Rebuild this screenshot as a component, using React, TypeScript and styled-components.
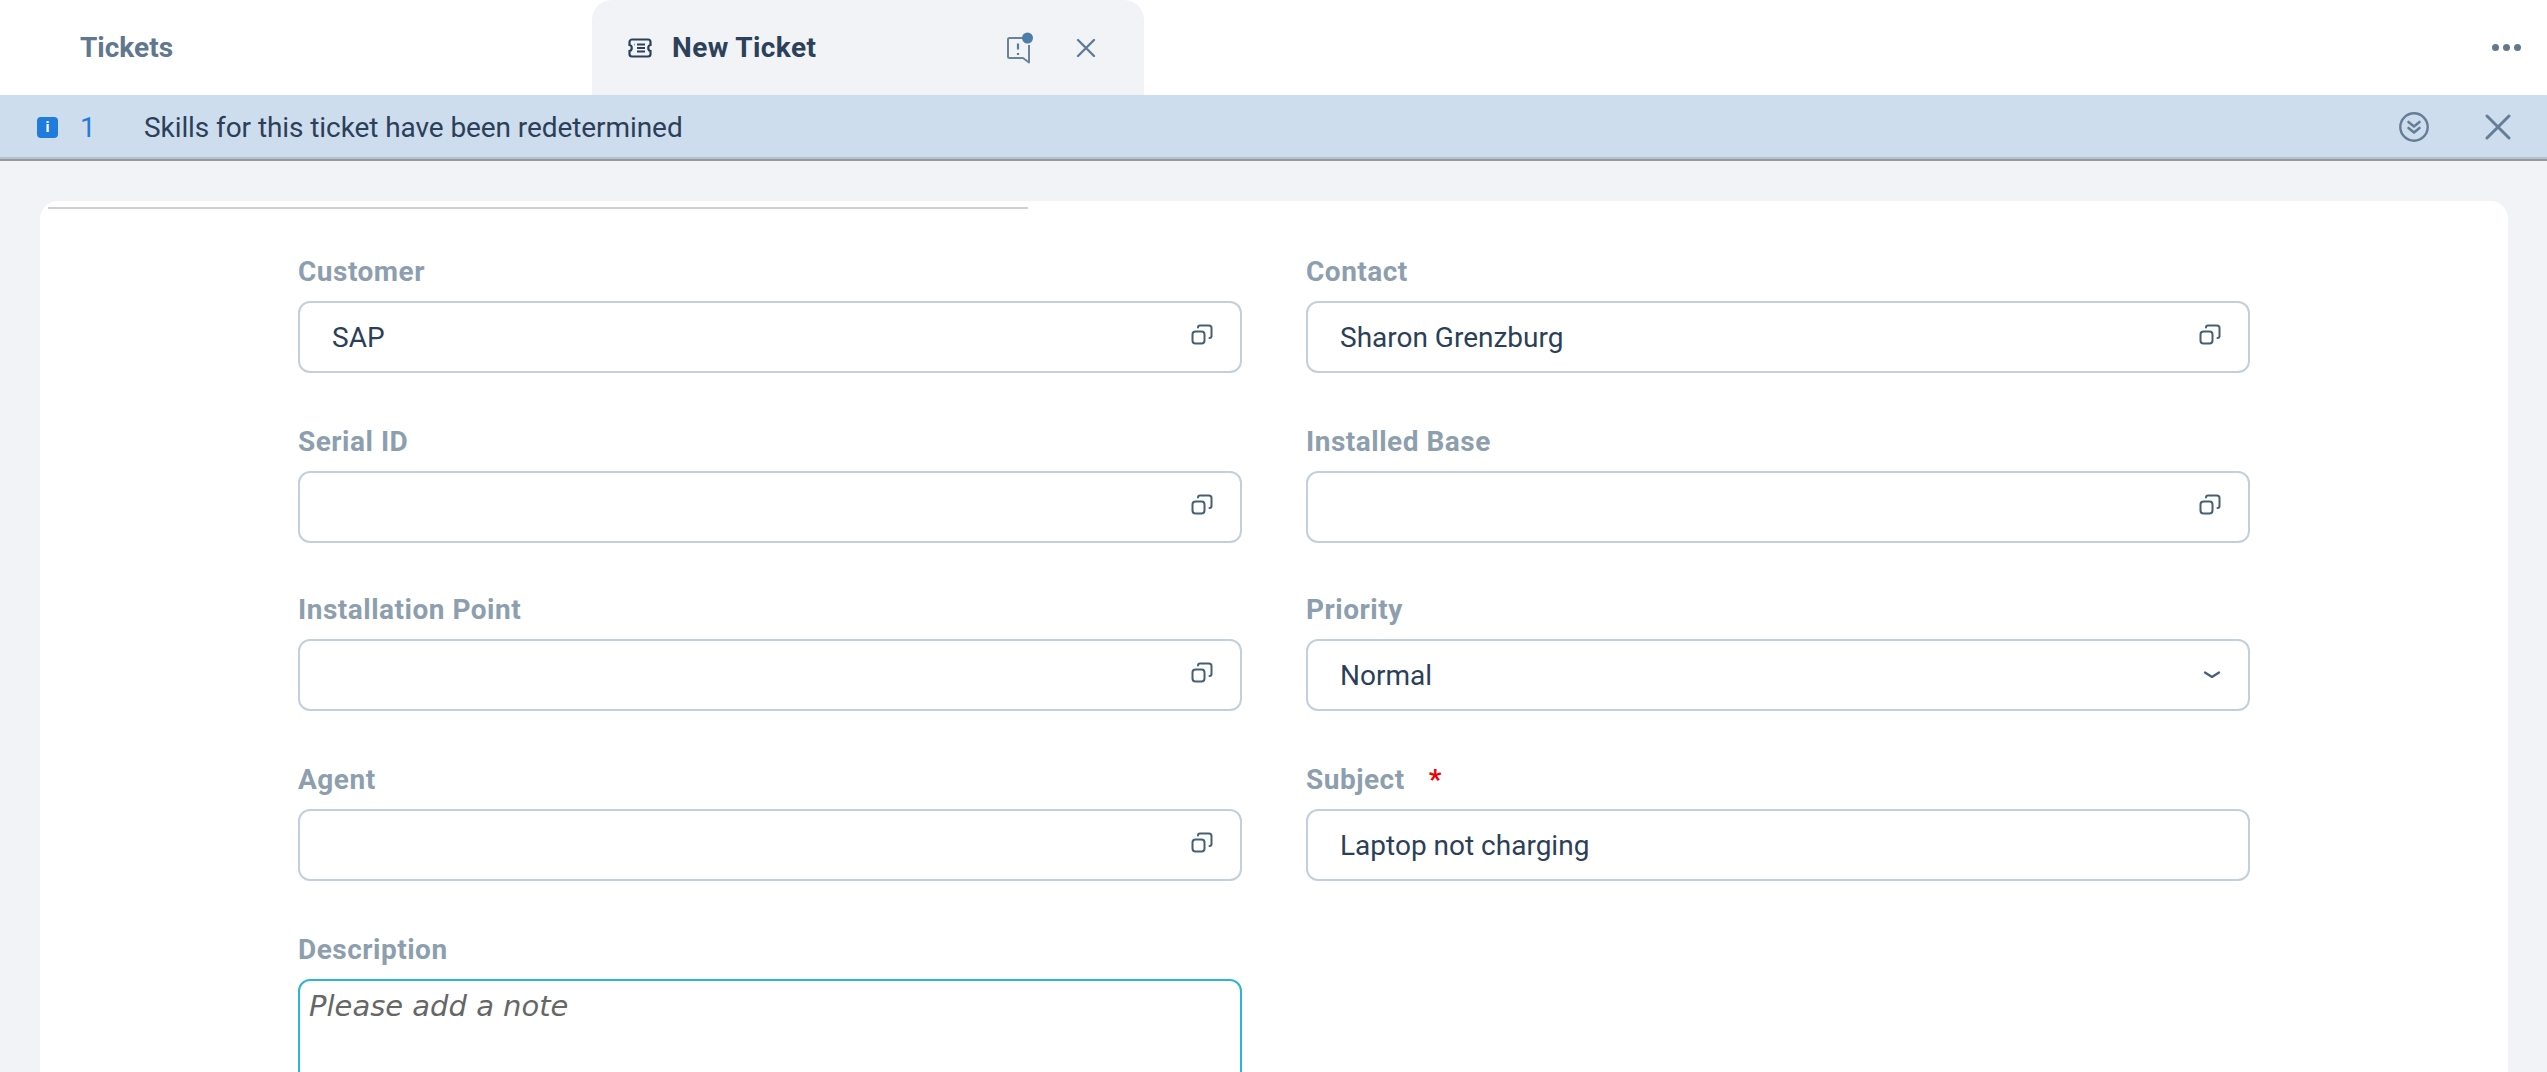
import React from "react";
import styled, { createGlobalStyle } from "styled-components";

const GlobalStyle = createGlobalStyle`
  html, body {
    margin: 0;
    padding: 0;
    height: 100%;
    overflow: hidden;
    background: #f1f3f7;
    font-family: Roboto, "Noto Sans", sans-serif;
  }
`;

const ValueHelpIcon = () => (
  <HelpSvg viewBox="0 0 22 22" fill="none" stroke="#475e75" strokeWidth="2" strokeLinecap="round">
    <rect x="1.5" y="7.5" width="12" height="12" rx="3" />
    <path d="M7 3.5c0-1 1-2 2-2h9c1.5 0 2.5 1 2.5 2.5v8c0 1.2-.8 2-2 2" />
  </HelpSvg>
);

const fields = [
  { label: "Customer", value: "SAP", help: true },
  { label: "Contact", value: "Sharon Grenzburg", help: true },
  { label: "Serial ID", value: "", help: true },
  { label: "Installed Base", value: "", help: true },
  { label: "Installation Point", value: "", help: true },
  { label: "Priority", value: "Normal", select: true },
  { label: "Agent", value: "", help: true },
  { label: "Subject", value: "Laptop not charging", required: true },
];

const App = (): JSX.Element => {
  return (
    <>
      <GlobalStyle />
      <Page>
        <TabBar>
          <PlainTab>Tickets</PlainTab>
          <ActiveTab>
            <TabTitle>
              <svg width="24" height="20" viewBox="0 0 24 20" fill="none" stroke="#2c4159" strokeWidth="2.2">
                <path d="M4 1.500h16c1.200 0 2.500 1 2.500 2.500v3c-3 .5-3 5.500 0 6v3c0 1.500-1.300 2.500-2.500 2.500H4c-1.200 0-2.500-1-2.500-2.500v-3c3-.5 3-5.500 0-6V4c0-1.500 1.300-2.500 2.500-2.500z" />
                <path d="M9 6.500h8M9 10h8M9 13.500h8M6 6.500h.5" strokeWidth="1.800" />
              </svg>
              New Ticket
            </TabTitle>
            <TabActions>
              <svg width="28" height="32" viewBox="0 0 28 32">
                <path d="M20 6H3.500C2.500 6 2 6.500 2 7.500v17c0 1 .5 1.500 1.500 1.500H17l6 4.500V13" fill="none" stroke="#6a829b" strokeWidth="2" strokeLinejoin="round" />
                <path d="M12 11.500v6M12 21v2" stroke="#5f7a94" strokeWidth="2.200" />
                <circle cx="21.500" cy="6" r="5.500" fill="#4d7ea8" />
              </svg>
              <svg width="20" height="20" viewBox="0 0 20 20" stroke="#617b95" strokeWidth="2.400" strokeLinecap="round">
                <path d="M2 2l16 16M18 2L2 18" />
              </svg>
            </TabActions>
          </ActiveTab>
          <OverflowDots>
            <i /><i /><i />
          </OverflowDots>
        </TabBar>

        <MessageStrip>
          <MessageLeft>
            <InfoBadge>i</InfoBadge>
            <MessageCount>1</MessageCount>
            <MessageText>Skills for this ticket have been redetermined</MessageText>
          </MessageLeft>
          <MessageActions>
            <svg width="32" height="32" viewBox="0 0 32 32" fill="none" stroke="#657e97" strokeLinecap="round" strokeLinejoin="round">
              <circle cx="16" cy="16" r="13.700" strokeWidth="2.400" />
              <path d="M10.500 11l5.500 4.500 5.500-4.500M10.500 17l5.500 4.500 5.500-4.500" strokeWidth="2.600" />
            </svg>
            <svg width="26" height="26" viewBox="0 0 26 26" stroke="#657e97" strokeWidth="3" strokeLinecap="round">
              <path d="M2 2l22 22M24 2L2 24" />
            </svg>
          </MessageActions>
        </MessageStrip>

        <Card>
          <TopRule />
          <FormGrid>
            {fields.map((field) => (
              <Field key={field.label}>
                <Label>
                  {field.label}
                  {field.required && <Required>*</Required>}
                </Label>
                <InputBox>
                  <span>{field.value}</span>
                  {field.help && <ValueHelpIcon />}
                  {field.select && (
                    <svg width="18" height="10" viewBox="0 0 18 10" fill="none" stroke="#475e75" strokeWidth="2.200" strokeLinecap="round" strokeLinejoin="round">
                      <path d="M2 2.500c2.500 1.500 4.500 3 7 4.500 2.500-1.500 4.500-3 7-4.500" />
                    </svg>
                  )}
                </InputBox>
              </Field>
            ))}
            <Field>
              <Label>Description</Label>
              <NoteBox>Please add a note</NoteBox>
            </Field>
          </FormGrid>
        </Card>
      </Page>
    </>
  );
};

const Page = styled.div`
  width: 2547px;
  height: 1072px;
  overflow: hidden;
  display: flex;
  flex-direction: column;
  background: #f1f3f7;
`;

const TabBar = styled.div`
  height: 95px;
  flex: none;
  display: flex;
  background: #ffffff;
`;

const PlainTab = styled.div`
  width: 512px;
  padding-left: 80px;
  display: flex;
  align-items: center;
  font-size: 28px;
  font-weight: 700;
  color: #5f778f;
`;

const ActiveTab = styled.div`
  width: 552px;
  padding: 0 48px 0 36px;
  box-sizing: border-box;
  display: flex;
  align-items: center;
  justify-content: space-between;
  background: #f1f3f7;
  border-radius: 20px 20px 0 0;
`;

const TabTitle = styled.div`
  display: flex;
  align-items: center;
  gap: 20px;
  font-size: 28px;
  font-weight: 700;
  letter-spacing: 0.4px;
  color: #2c4159;
`;

const TabActions = styled.div`
  display: flex;
  align-items: center;
  gap: 42px;
`;

const OverflowDots = styled.div`
  margin-left: auto;
  padding-right: 26px;
  display: flex;
  align-items: center;
  gap: 4px;

  i {
    width: 7px;
    height: 7px;
    border-radius: 50%;
    background: #62788f;
  }
`;

const MessageStrip = styled.div`
  height: 64px;
  flex: none;
  padding: 0 36px 0 37px;
  display: flex;
  align-items: center;
  justify-content: space-between;
  background: #cddded;
  border-bottom: 2px solid #969a9d;
  box-shadow: inset 0 -2px 0 #b3c2cf;
`;

const MessageLeft = styled.div`
  display: flex;
  align-items: center;
`;

const InfoBadge = styled.div`
  width: 21px;
  height: 21px;
  border-radius: 4px;
  background: #1f7bdc;
  color: #ffffff;
  font-size: 15px;
  font-weight: 700;
  display: flex;
  align-items: center;
  justify-content: center;
`;

const MessageCount = styled.div`
  margin-left: 22px;
  width: 64px;
  font-size: 28px;
  color: #1f7bdc;
`;

const MessageText = styled.div`
  font-size: 28px;
  letter-spacing: -0.08px;
  color: #2c3f58;
`;

const MessageActions = styled.div`
  display: flex;
  align-items: center;
  gap: 55px;
`;

const Card = styled.div`
  flex: 1;
  margin: 40px 39px 0 40px;
  padding: 6px 8px 0;
  background: #ffffff;
  border-radius: 18px 18px 0 0;
`;

const TopRule = styled.div`
  width: 980px;
  height: 2px;
  background: #cfcfcf;
`;

const FormGrid = styled.div`
  margin: 45px 0 0 250px;
  width: 1952px;
  display: grid;
  grid-template-columns: 944px 944px;
  column-gap: 64px;
  row-gap: 51px;
`;

const Field = styled.div`
  display: flex;
  flex-direction: column;
  gap: 11px;

  &:nth-child(5),
  &:nth-child(6) {
    margin-top: -2px;
  }
`;

const Label = styled.div`
  height: 36px;
  line-height: 36px;
  font-size: 28px;
  font-weight: 700;
  letter-spacing: 0.5px;
  color: #8d9fae;
`;

const Required = styled.span`
  margin-left: 24px;
  color: #f00000;
`;

const InputBox = styled.div`
  height: 72px;
  box-sizing: border-box;
  padding: 0 27px 0 32px;
  display: flex;
  align-items: center;
  justify-content: space-between;
  background: #ffffff;
  border: 2px solid #c3cfdb;
  border-radius: 12px;
  font-size: 28px;
  color: #2c3f58;
`;

const HelpSvg = styled.svg`
  width: 22px;
  height: 22px;
  margin-top: -4px;
`;

const NoteBox = styled.div`
  height: 200px;
  box-sizing: border-box;
  padding: 8px 9px;
  background: #ffffff;
  border: 2px solid #2fb4d4;
  border-radius: 12px;
  font-family: "DejaVu Sans", sans-serif;
  font-style: italic;
  font-size: 29px;
  color: #666666;
`;

export default App;
